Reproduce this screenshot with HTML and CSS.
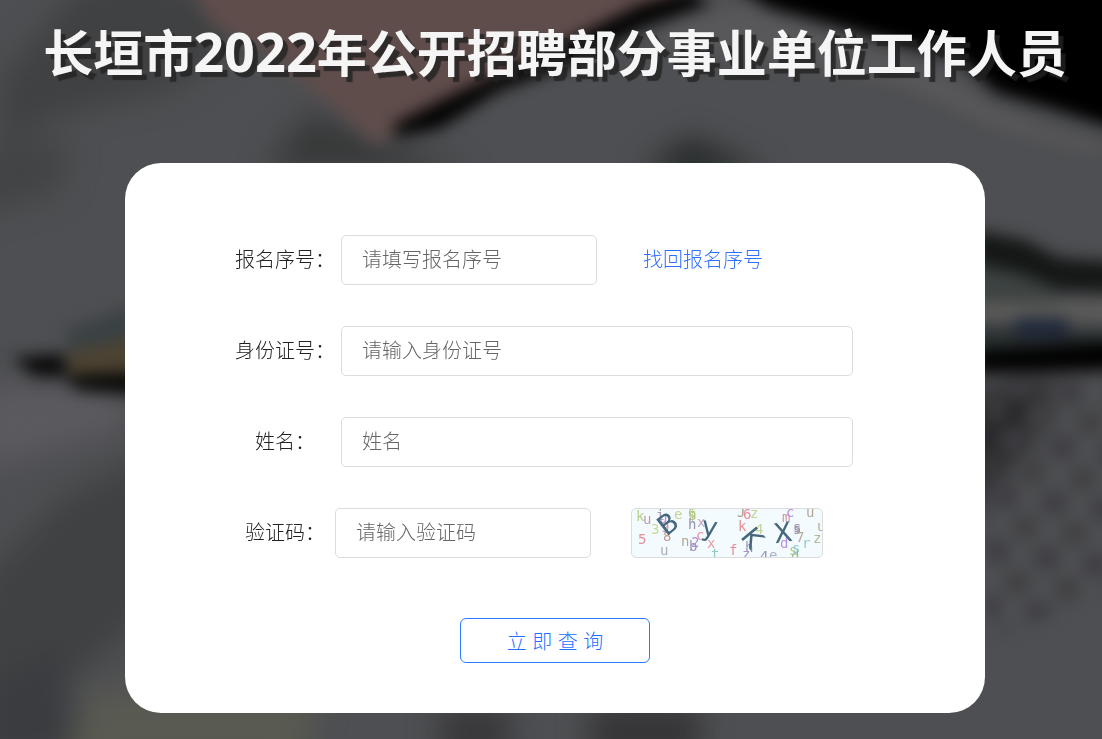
FILE: index.html
```html
<!DOCTYPE html>
<html lang="zh-CN">
<head>
<meta charset="utf-8">
<title>长垣市2022年公开招聘部分事业单位工作人员</title>
<link rel="stylesheet" href="styles.css">
</head>
<body>
<svg class="backdrop" viewBox="0 0 1102 739" preserveAspectRatio="xMidYMid slice" aria-hidden="true">
  <defs>
    <filter id="soft" x="-10%" y="-10%" width="120%" height="120%" color-interpolation-filters="sRGB"><feGaussianBlur stdDeviation="8"/></filter>
    <filter id="wide" x="-20%" y="-20%" width="140%" height="140%" color-interpolation-filters="sRGB"><feGaussianBlur stdDeviation="15"/></filter>
    <pattern id="keys" width="50" height="56" patternUnits="userSpaceOnUse" patternTransform="rotate(8)">
      <rect x="2" y="4" width="24" height="22" fill="#3e3e42"/>
      <rect x="27" y="32" width="24" height="22" fill="#404043"/>
    </pattern>
  </defs>
  <rect width="1102" height="739" fill="#4e4f52"/>
  <g filter="url(#wide)">
    <path d="M85 -20H190L240 45L170 90L60 115L0 150V80Z" fill="#404142"/>
    <path d="M265 170L310 112L350 130L470 170Z" fill="#363838"/>
    <path d="M-20 150L70 140L60 190L-20 215Z" fill="#424345"/>
    <path d="M-20 385H125V430L-20 470Z" fill="#5b5a5f"/>
    <path d="M165 445L60 500L-20 580V700L70 680L165 600Z" fill="#404142"/>
    <path d="M-20 690L60 650L80 760H-20Z" fill="#3a3c40"/>
    <path d="M90 690H320L300 770H60Z" fill="#595a51"/>
    <path d="M440 706H510V760H440Z" fill="#38383b"/>
    <path d="M590 706H700V760H590Z" fill="#353537"/>
    <path d="M640 175L690 138L770 175Z" fill="#222626"/>
    <path d="M965 400L1060 370L1030 440L965 520Z" fill="#28282b"/>
  </g>
  <g filter="url(#soft)">
    <path d="M185 -20H700L640 15L560 58L480 90L420 118L375 145L335 108L270 55L215 25Z" fill="#5f4d4b"/>
    <path d="M395 124L455 94L510 68L580 35L640 5L690 -10L710 4L645 26L560 68L500 90L440 128L395 137Z" fill="#000"/>
    <path d="M645 45L690 15L740 5L800 22L860 45L935 70L990 105L1050 130L1102 145V155L1000 130L900 85L760 60Z" fill="#58575a"/>
    <path d="M725 -20L770 8L830 24L900 44L960 58L995 92L1050 108L1120 130V-20Z" fill="#000"/>
    <path d="M65 330L135 305V345L70 350Z" fill="#3a4144"/>
    <path d="M68 352L145 334V378H68Z" fill="#4c4332"/>
    <path d="M12 358L65 354V376L35 376ZM60 376L145 372V395L80 390Z" fill="#060606"/>
    <path d="M975 230L1025 240L1060 258L1120 262V293L1060 291L1020 274L975 264Z" fill="#141716"/>
    <path d="M975 265L1020 276L1060 294V310H975Z" fill="#3d4342"/>
    <path d="M975 303H1120V319H975Z" fill="#5e5d5b"/>
    <path d="M975 326L1120 330V352H975Z" fill="#2b3132"/>
    <path d="M1015 318H1068V336H1015Z" fill="#1d2639"/>
    <path d="M975 350L1120 341V370L975 373Z" fill="#000"/>
    <path d="M990 378H1120V590L985 640V490Z" fill="url(#keys)"/>
  </g>
</svg>
<main class="page">
  <h1 class="title">长垣市<span class="year">2022</span>年公开招聘部分事业单位工作人员</h1>
  <form class="card">
    <div class="row">
      <label class="label" for="serial">报名序号：</label>
      <input class="field field-short" id="serial" type="text" placeholder="请填写报名序号">
      <a class="link" href="#">找回报名序号</a>
    </div>
    <div class="row">
      <label class="label" for="idcard">身份证号：</label>
      <input class="field" id="idcard" type="text" placeholder="请输入身份证号">
    </div>
    <div class="row">
      <label class="label" for="name">姓名：</label>
      <input class="field" id="name" type="text" placeholder="姓名">
    </div>
    <div class="row row-code">
      <label class="label" for="code">验证码：</label>
      <input class="field field-short" id="code" type="text" placeholder="请输入验证码">
      <svg class="captcha" viewBox="0 0 190 48" role="img" aria-label="验证码图片">
        <g class="noise">
          <text x="4" y="12" fill="#b8d08f">k</text><text x="11" y="15" fill="#c898ae">u</text>
          <text x="24" y="11" fill="#a698b8">i</text><text x="27" y="14" fill="#b78fe0">u</text>
          <text x="42" y="10" fill="#c5d494">e</text><text x="56" y="9" fill="#adc983">6</text>
          <text x="56" y="11" fill="#b6c783">$</text><text x="19" y="25" fill="#c9d899">3</text>
          <text x="6" y="35" fill="#e88f98">5</text><text x="31" y="32" fill="#c49c8f">8</text>
          <text x="29" y="23" fill="#d598a6">9</text><text x="28" y="46" fill="#b2aabf">u</text>
          <text x="56" y="20" fill="#9892b2">h</text><text x="65" y="18" fill="#c2a5ba">x</text>
          <text x="64" y="31" fill="#e994a3">c</text><text x="49" y="37" fill="#b8a78f">n</text>
          <text x="59" y="38" fill="#b592e2">2</text><text x="57" y="42" fill="#9893b4">b</text>
          <text x="75" y="39" fill="#e99ca3">x</text><text x="79" y="50" fill="#8fcac3">t</text>
          <text x="105" y="8" fill="#a89e90">J</text><text x="111" y="10" fill="#ea8f98">6</text>
          <text x="118" y="9" fill="#c4d597">z</text><text x="106" y="22" fill="#e99198">k</text>
          <text x="123" y="25" fill="#c4d697">4</text><text x="97" y="46" fill="#ea8f93">f</text>
          <text x="113" y="43" fill="#9895b8">h</text><text x="110" y="50" fill="#ab91dd">z</text>
          <text x="128" y="52" fill="#9894b8">4</text><text x="137" y="51" fill="#a8b0c9">e</text>
          <text x="150" y="13" fill="#d797a4">m</text><text x="154" y="8" fill="#b58fe2">c</text>
          <text x="174" y="8" fill="#b3a898">u</text><text x="161" y="23" fill="#9895b2">s</text>
          <text x="161" y="25" fill="#989198">s</text><text x="164" y="33" fill="#b6a998">7</text>
          <text x="148" y="39" fill="#ba90e9">d</text><text x="157" y="46" fill="#b3c983">s</text>
          <text x="160" y="44" fill="#8fcacf">s</text><text x="159" y="52" fill="#9eb890">d</text>
          <text x="170" y="39" fill="#93cdcf">r</text><text x="181" y="34" fill="#b3b898">z</text>
          <text x="185" y="22" fill="#b5ab9a">u</text>
        </g>
        <g class="code">
          <text y="9" transform="translate(36 15) rotate(-38)">B</text>
          <text y="5" transform="translate(77 22) rotate(8)">y</text>
          <text y="9" transform="translate(120 29) rotate(50)">K</text>
          <text y="9" transform="translate(151 24) rotate(-8)">X</text>
        </g>
      </svg>
    </div>
    <button class="submit" type="button">立 即 查 询</button>
  </form>
</main>
</body>
</html>
```
FILE: styles.css
```css
* {
  box-sizing: border-box;
}

body {
  margin: 0;
  min-height: 100vh;
  background: #4e4f52;
  color: #222;
  font-family: "Liberation Sans", "Noto Sans CJK SC", sans-serif;
  font-size: 20px;
  font-weight: 300;
}

.backdrop {
  position: fixed;
  inset: 0;
  z-index: -1;
  width: 100%;
  height: 100%;
}

.page {
  display: flex;
  flex-direction: column;
  align-items: center;
  gap: 75px;
  padding: 13px 0 24px 8px;
}

.title {
  margin: 0;
  color: #f5f5f5;
  font-family: "Noto Sans CJK SC", sans-serif;
  font-size: 50px;
  font-weight: 700;
  line-height: 75px;
  white-space: nowrap;
  text-shadow: 5px 5px 1px rgba(34, 34, 34, 0.8);
}

.year {
  font-family: "Noto Sans", sans-serif;
  font-size: 54px;
  line-height: 50px;
}

.card {
  display: flex;
  flex-direction: column;
  gap: 41px;
  width: 860px;
  max-width: 100%;
  padding: 72px 110px 50px;
  border-radius: 36px;
  background: #fff;
}

.row {
  display: flex;
  align-items: center;
  gap: 6px;
}

.row-code {
  gap: 0;
}

.label,
.link {
  line-height: 24px;
}

.label {
  width: 100px;
  text-align: center;
  white-space: nowrap;
}

.field {
  width: 512px;
  height: 50px;
  padding: 0 20px;
  border: 1px solid #dcdcdc;
  border-radius: 5px;
  background: #fff;
  color: #333;
  font: inherit;
}

.field::placeholder {
  color: #666;
}

.field-short {
  width: 256px;
}

.link {
  margin-left: 40px;
  color: #3070ff;
  text-decoration: none;
}

.captcha {
  width: 192px;
  height: 50px;
  margin-left: 40px;
  border: 1px solid #dcdcdc;
  border-radius: 5px;
  background: #f3fbfe;
}

.noise {
  font-family: "DejaVu Sans Mono", monospace;
  font-size: 14px;
  font-weight: 400;
}

.code {
  fill: #46687c;
  font-family: "DejaVu Sans", sans-serif;
  font-size: 27px;
  font-weight: 400;
  text-anchor: middle;
}

.submit {
  align-self: center;
  width: 190px;
  height: 45px;
  margin-top: 19px;
  border: 1px solid #2a7cff;
  border-radius: 6px;
  background: #fff;
  color: #1f70ff;
  font: inherit;
}
```
